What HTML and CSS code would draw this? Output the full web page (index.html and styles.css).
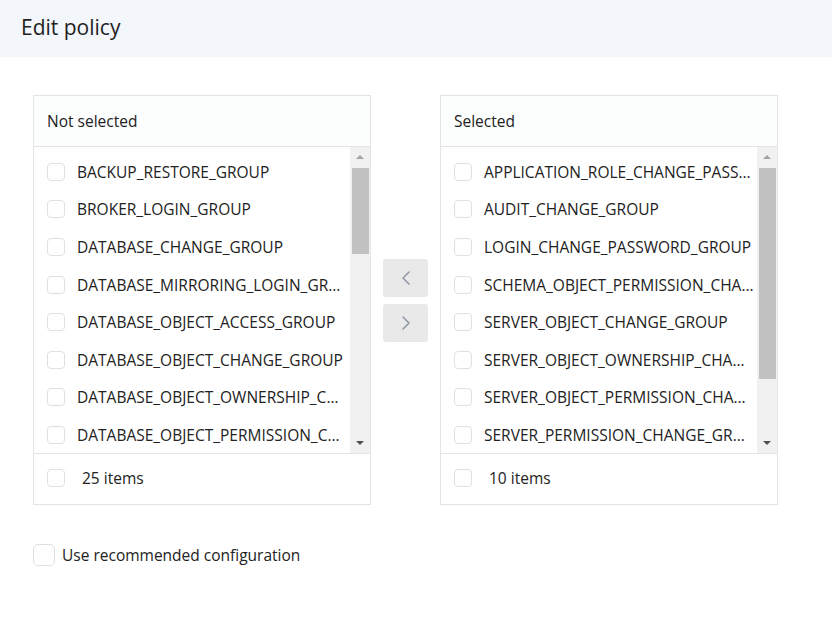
FILE: index.html
```html
<!DOCTYPE html>
<html lang="en">
<head>
<meta charset="utf-8">
<title>Edit policy</title>
<link rel="stylesheet" href="styles.css">
</head>
<body>
<header class="page-header"><h1 class="title">Edit policy</h1></header>
<main class="content">
  <div class="transfer">
    <section class="panel">
      <div class="panel-head">Not selected</div>
      <div class="panel-body">
        <ul class="list">
          <li class="item"><span class="cb"></span><span class="label">BACKUP_RESTORE_GROUP</span></li>
          <li class="item"><span class="cb"></span><span class="label">BROKER_LOGIN_GROUP</span></li>
          <li class="item"><span class="cb"></span><span class="label">DATABASE_CHANGE_GROUP</span></li>
          <li class="item"><span class="cb"></span><span class="label">DATABASE_MIRRORING_LOGIN_GROUP</span></li>
          <li class="item"><span class="cb"></span><span class="label">DATABASE_OBJECT_ACCESS_GROUP</span></li>
          <li class="item"><span class="cb"></span><span class="label">DATABASE_OBJECT_CHANGE_GROUP</span></li>
          <li class="item"><span class="cb"></span><span class="label">DATABASE_OBJECT_OWNERSHIP_CHANGE_GROUP</span></li>
          <li class="item"><span class="cb"></span><span class="label">DATABASE_OBJECT_PERMISSION_CHANGE_GROUP</span></li>
          <li class="item"><span class="cb"></span><span class="label">DATABASE_OPERATION_GROUP</span></li>
        </ul>
        <div class="scrollbar">
          <div class="sb-btn"><span class="arrow-up"></span></div>
          <div class="sb-track"><div class="sb-thumb" style="height:86px"></div></div>
          <div class="sb-btn"><span class="arrow-down"></span></div>
        </div>
      </div>
      <div class="panel-foot"><span class="cb"></span><span class="count">25 items</span></div>
    </section>

    <div class="ops">
      <button class="op-btn" type="button" aria-label="Move left">
        <svg width="10" height="14" viewBox="0 0 10 14"><path d="M8 1 L2 7 L8 13" fill="none" stroke="#8e97a3" stroke-width="1.5" stroke-linecap="round" stroke-linejoin="round"/></svg>
      </button>
      <button class="op-btn" type="button" aria-label="Move right">
        <svg width="10" height="14" viewBox="0 0 10 14"><path d="M2 1 L8 7 L2 13" fill="none" stroke="#8e97a3" stroke-width="1.5" stroke-linecap="round" stroke-linejoin="round"/></svg>
      </button>
    </div>

    <section class="panel">
      <div class="panel-head">Selected</div>
      <div class="panel-body">
        <ul class="list">
          <li class="item"><span class="cb"></span><span class="label">APPLICATION_ROLE_CHANGE_PASSWORD_GROUP</span></li>
          <li class="item"><span class="cb"></span><span class="label">AUDIT_CHANGE_GROUP</span></li>
          <li class="item"><span class="cb"></span><span class="label">LOGIN_CHANGE_PASSWORD_GROUP</span></li>
          <li class="item"><span class="cb"></span><span class="label">SCHEMA_OBJECT_PERMISSION_CHANGE_GROUP</span></li>
          <li class="item"><span class="cb"></span><span class="label">SERVER_OBJECT_CHANGE_GROUP</span></li>
          <li class="item"><span class="cb"></span><span class="label">SERVER_OBJECT_OWNERSHIP_CHANGE_GROUP</span></li>
          <li class="item"><span class="cb"></span><span class="label">SERVER_OBJECT_PERMISSION_CHANGE_GROUP</span></li>
          <li class="item"><span class="cb"></span><span class="label">SERVER_PERMISSION_CHANGE_GROUP</span></li>
          <li class="item"><span class="cb"></span><span class="label">SERVER_ROLE_MEMBER_CHANGE_GROUP</span></li>
          <li class="item"><span class="cb"></span><span class="label">SERVER_STATE_CHANGE_GROUP</span></li>
        </ul>
        <div class="scrollbar">
          <div class="sb-btn"><span class="arrow-up"></span></div>
          <div class="sb-track"><div class="sb-thumb" style="height:211px"></div></div>
          <div class="sb-btn"><span class="arrow-down"></span></div>
        </div>
      </div>
      <div class="panel-foot"><span class="cb"></span><span class="count">10 items</span></div>
    </section>
  </div>

  <label class="recommend"><span class="cb cb-lg"></span><span>Use recommended configuration</span></label>
</main>
</body>
</html>
```

FILE: styles.css
```css
* { box-sizing: border-box; }

html, body {
  margin: 0;
  padding: 0;
  background: #ffffff;
  font-family: "Open Sans", "Noto Sans", sans-serif;
  color: #222222;
}

.page-header {
  height: 57px;
  background: #f3f6fa;
  display: flex;
  align-items: center;
  padding-left: 21px;
}

.title {
  margin: 0;
  font-size: 21px;
  font-weight: 400;
  color: #1f1f1f;
  line-height: 1;
  padding-bottom: 3px;
}

.content {
  padding: 38px 0 0 33px;
}

.transfer {
  display: flex;
  align-items: center;
}

.panel {
  width: 338px;
  height: 410px;
  border: 1px solid #e2e4e6;
  display: flex;
  flex-direction: column;
}

.panel-head {
  height: 51px;
  flex: none;
  background: #fcfdfd;
  border-bottom: 1px solid #e2e4e6;
  padding-left: 13px;
  display: flex;
  align-items: center;
  font-size: 15.5px;
}

.panel-body {
  height: 306px;
  flex: none;
  display: flex;
}

.list {
  flex: 1;
  min-width: 0;
  margin: 0;
  padding: 6px 0 0 0;
  list-style: none;
  overflow: hidden;
}

.item {
  height: 37.6px;
  display: flex;
  align-items: center;
  padding-left: 13px;
  padding-right: 2px;
  font-size: 15.5px;
}

.cb {
  flex: none;
  width: 18px;
  height: 18px;
  border: 1px solid #dde1e6;
  border-radius: 4px;
  background: #fff;
}

.label {
  margin-left: 12px;
  flex: 1;
  min-width: 0;
  white-space: nowrap;
  overflow: hidden;
  text-overflow: ellipsis;
}

.scrollbar {
  flex: none;
  width: 20px;
  background: #f1f1f1;
  display: flex;
  flex-direction: column;
}

.sb-btn {
  height: 20px;
  flex: none;
  display: flex;
  align-items: center;
  justify-content: center;
}

.arrow-up {
  width: 0;
  height: 0;
  border-left: 4px solid transparent;
  border-right: 4px solid transparent;
  border-bottom: 4px solid #a3a3a3;
}

.arrow-down {
  width: 0;
  height: 0;
  border-left: 4px solid transparent;
  border-right: 4px solid transparent;
  border-top: 4px solid #505050;
}

.sb-track {
  flex: 1;
  padding: 1px 1px 0 2px;
}

.sb-thumb {
  background: #c1c1c1;
  width: 17px;
}

.panel-foot {
  flex: 1;
  border-top: 1px solid #e2e4e6;
  padding-left: 13px;
  padding-bottom: 2px;
  display: flex;
  align-items: center;
  font-size: 15.5px;
}

.count {
  margin-left: 17px;
}

.ops {
  width: 69px;
  padding-left: 12px;
  display: flex;
  flex-direction: column;
  gap: 7px;
}

.op-btn {
  width: 45px;
  height: 38px;
  border: none;
  border-radius: 3px;
  background: #e9e9e9;
  padding: 0;
  display: flex;
  align-items: center;
  justify-content: center;
}

.recommend {
  margin-top: 39px;
  display: flex;
  align-items: center;
  gap: 7px;
  font-size: 15.5px;
  color: #222222;
}

.cb-lg {
  width: 22px;
  height: 22px;
  border-radius: 5px;
}
```
